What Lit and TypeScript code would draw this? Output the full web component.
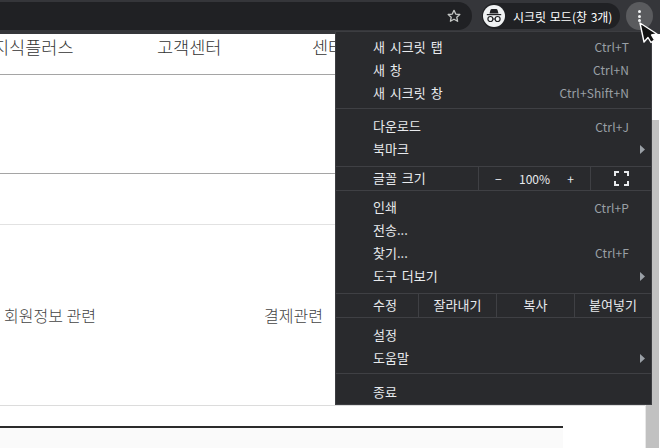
import { LitElement, html, css } from "lit";
import { customElement } from "lit/decorators.js";

const arrow = html`<svg class="arrow" width="5" height="9" viewBox="0 0 5 9"><path d="M0 0 L5 4.5 L0 9 Z" fill="#9aa0a6"/></svg>`;

@customElement("app-root")
export class AppRoot extends LitElement {
  static styles = css`
    :host { display: block; width: 660px; height: 448px; position: relative; overflow: hidden; background: #fff;
      font-family: "Noto Sans CJK KR", "Noto Sans", sans-serif; }
    .toolbar { height: 34px; box-sizing: border-box; padding: 2px 7px 4px 0; background: #35363a; display: flex; align-items: center; }
    .omnibox { flex: 1; height: 28px; background: #202124; border-radius: 0 14px 14px 0; display: flex; align-items: center; justify-content: flex-end; padding-right: 10px; margin-right: 10px; }
    .incog { height: 26px; width: 138px; margin-right: 6px; border-radius: 13px; background: #202124; display: flex; align-items: center; gap: 8px; padding-left: 1px; box-sizing: border-box; color: #fff; font-size: 12px; word-spacing: 1px; white-space: nowrap; }
    .avatar { width: 22px; height: 22px; border-radius: 50%; background: #f1f3f4; display: flex; align-items: center; justify-content: center; }
    .dots { width: 27px; height: 28px; border-radius: 50%; background: #5a5b5e; display: flex; flex-direction: column; align-items: center; justify-content: center; gap: 1.5px; }
    .dots i { width: 3px; height: 3px; border-radius: 50%; background: #f1f3f4; display: block; }
    .page { color: #333; }
    .nav { height: 41px; box-sizing: border-box; padding-bottom: 15px; display: flex; font-size: 17.5px; font-weight: 300; margin-left: -7px; border-bottom: 1px solid #a5a5a5; align-items: center; white-space: nowrap; }
    .nav span:nth-child(1) { width: 164px; }
    .nav span:nth-child(2) { width: 155px; }
    .gap1 { height: 99px; box-sizing: border-box; border-bottom: 1px solid #a5a5a5; }
    .gap2 { height: 51px; box-sizing: border-box; border-bottom: 1px solid #e2e2e2; }
    .row { height: 181px; box-sizing: border-box; border-bottom: 1px solid #dcdcdc; display: flex; align-items: center; font-size: 16px; font-weight: 300; color: #444; padding-left: 4px; }
    .row span:first-child { width: 260px; }
    .bottom { margin-top: 20px; width: 563px; height: 40px; border-top: 2px solid #2b2b2b; background: #fafafa; }
    .track { position: absolute; right: 0; top: 34px; bottom: 0; width: 15px; background: #fff; border-left: 1px solid #e8e8e8; box-sizing: border-box; }
    .thumb { position: absolute; top: 86px; bottom: 0; left: 0; right: 1px; background: #c1c1c1; }
    .menu { position: absolute; left: 335px; top: 31px; width: 317px; height: 374px; box-sizing: border-box; background: #292a2d; border: 1px solid #3c3d41; color: #e8eaed; font-size: 13px; word-spacing: 2px; padding-top: 3.5px; }
    .item { height: 23px; box-sizing: border-box; padding-bottom: 2px; display: flex; align-items: center; padding-left: 37px; padding-right: 22px; position: relative; line-height: 1; }
    .g2 .item { height: 22.5px; }
    .g3 .item { height: 22.75px; }
    .item .label { flex: 1; }
    .item .key { color: #9aa0a6; font-size: 12px; letter-spacing: 0.12px; word-spacing: 0; margin-top: 2px; }
    .arrow { position: absolute; right: 6px; top: 7px; }
    .sep { height: 1px; background: #3f4044; }
    .a { margin-top: 3.5px; margin-bottom: 6.5px; }
    .b { margin-top: 5.5px; }
    .c { margin-bottom: 5.5px; }
    .ctl { height: 23px; display: flex; align-items: stretch; line-height: 1; }
    .ctl > * { display: flex; align-items: center; box-sizing: border-box; }
    .ctl .name { padding-left: 37px; padding-bottom: 2px; }
    .zoomname { width: 142px; }
    .zoomvals { width: 113px; border-left: 1px solid #3f4044; border-right: 1px solid #3f4044; justify-content: space-between; padding: 0 16px; font-size: 12px; }
    .full { flex: 1; justify-content: center; }
    .editname { width: 82px; }
    .edit { width: 78px; border-left: 1px solid #3f4044; justify-content: center; padding-bottom: 2px; }
    .edit.last { flex: 1; }
    .cursor { position: absolute; left: 639px; top: 22px; }
  `;

  item(label: string, key = "", sub = false) {
    return html`<div class="item"><span class="label">${label}</span>${key ? html`<span class="key">${key}</span>` : ""}${sub ? arrow : ""}</div>`;
  }

  render() {
    return html`
      <div class="toolbar">
        <div class="omnibox">
          <svg width="16" height="16" viewBox="0 0 24 24" fill="none" stroke="#c4c7c5" stroke-width="2" stroke-linejoin="round"><path d="M12 3.5l2.6 5.6 6.1.7-4.5 4.1 1.2 6-5.4-3-5.4 3 1.2-6-4.5-4.1 6.1-.7z"/></svg>
        </div>
        <div class="incog">
          <span class="avatar">
            <svg width="20" height="20" viewBox="0 0 20 20" fill="#202124"><path d="M6.4 4.2q.3-1.2 1.5-1.2h4.2q1.2 0 1.5 1.2l.9 3.4H5.5z"/><path d="M2.8 8h14.4v1.2H2.8z"/><circle cx="6.4" cy="13" r="2.5" fill="none" stroke="#202124" stroke-width="1.2"/><circle cx="13.6" cy="13" r="2.5" fill="none" stroke="#202124" stroke-width="1.2"/><path d="M8.6 12.5h2.8v1H8.6z"/></svg>
          </span>
          <span>시크릿 모드(창 3개)</span>
        </div>
        <div class="dots"><i></i><i></i><i></i></div>
      </div>
      <div class="page">
        <div class="nav"><span>지식플러스</span><span>고객센터</span><span>센터</span></div>
        <div class="gap1"></div>
        <div class="gap2"></div>
        <div class="row"><span>회원정보 관련</span><span>결제관련</span></div>
        <div class="bottom"></div>
      </div>
      <div class="track"><div class="thumb"></div></div>
      <div class="menu">
        ${this.item("새 시크릿 탭", "Ctrl+T")}
        ${this.item("새 창", "Ctrl+N")}
        ${this.item("새 시크릿 창", "Ctrl+Shift+N")}
        <div class="sep a"></div>
        <div class="g2">
          ${this.item("다운로드", "Ctrl+J")}
          ${this.item("북마크", "", true)}
        </div>
        <div class="sep b"></div>
        <div class="ctl">
          <span class="name zoomname">글꼴 크기</span>
          <span class="zoomvals"><span>−</span><span>100%</span><span>+</span></span>
          <span class="full"><svg width="15" height="15" viewBox="0 0 15 15" fill="none" stroke="#e8eaed" stroke-width="2"><path d="M1 5V1h4M10 1h4v4M14 10v4h-4M5 14H1v-4"/></svg></span>
        </div>
        <div class="sep c"></div>
        <div class="g3">
          ${this.item("인쇄", "Ctrl+P")}
          ${this.item("전송...")}
          ${this.item("찾기...", "Ctrl+F")}
          ${this.item("도구 더보기", "", true)}
        </div>
        <div class="sep b"></div>
        <div class="ctl">
          <span class="name editname">수정</span>
          <span class="edit">잘라내기</span><span class="edit">복사</span><span class="edit last">붙여넣기</span>
        </div>
        <div class="sep c"></div>
        ${this.item("설정")}
        ${this.item("도움말", "", true)}
        <div class="sep a"></div>
        ${this.item("종료")}
      </div>
      <svg class="cursor" width="20" height="24" viewBox="0 0 20 24"><path d="M1 1 L5 20 L9 15.5 L12 20.5 L15.5 18 L12.5 13 L18 12 Z" fill="#111" stroke="#fff" stroke-width="1.4" stroke-linejoin="round"/></svg>
    `;
  }
}
